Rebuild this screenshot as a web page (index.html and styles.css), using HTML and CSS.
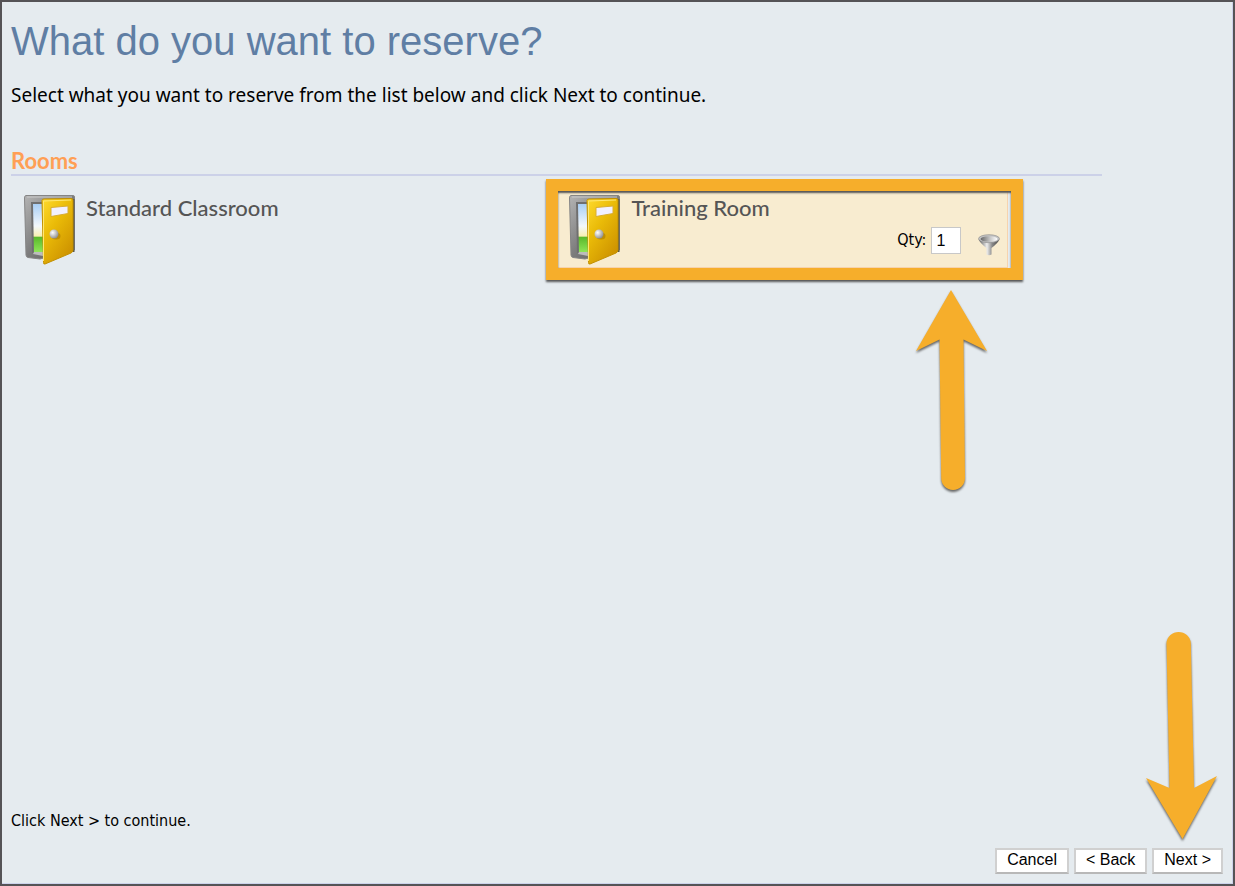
FILE: index.html
```html
<!DOCTYPE html>
<html lang="en">
<head>
<meta charset="utf-8">
<title>What do you want to reserve?</title>
<link rel="stylesheet" href="styles.css">
</head>
<body>
<svg class="defs" aria-hidden="true">
  <defs>
    <linearGradient id="frame" x1="0" y1="0" x2="1" y2="1">
      <stop offset="0" stop-color="#b4b4b4"/><stop offset=".5" stop-color="#7c7c7c"/><stop offset="1" stop-color="#5a5a5a"/>
    </linearGradient>
    <linearGradient id="view" x1="0" y1="0" x2="0" y2="1">
      <stop offset="0" stop-color="#a9cff5"/><stop offset=".45" stop-color="#f3f8fc"/><stop offset=".66" stop-color="#f7efb0"/>
      <stop offset=".67" stop-color="#58b82a"/><stop offset="1" stop-color="#92e85a"/>
    </linearGradient>
    <linearGradient id="leaf" x1="0" y1="0" x2=".7" y2="1">
      <stop offset="0" stop-color="#ffdb2e"/><stop offset=".45" stop-color="#eabb08"/><stop offset="1" stop-color="#cd9200"/>
    </linearGradient>
    <radialGradient id="knob" cx=".35" cy=".35" r=".7">
      <stop offset="0" stop-color="#ffffff"/><stop offset="1" stop-color="#8d8d8d"/>
    </radialGradient>
    <linearGradient id="metal" x1="0" y1="0" x2="1" y2="0">
      <stop offset="0" stop-color="#555"/><stop offset=".4" stop-color="#eee"/><stop offset=".65" stop-color="#888"/><stop offset="1" stop-color="#444"/>
    </linearGradient>
    <linearGradient id="bowl" x1="0" y1="0" x2="1" y2="0">
      <stop offset="0" stop-color="#666"/><stop offset=".6" stop-color="#ccc"/><stop offset="1" stop-color="#fff"/>
    </linearGradient>
    <symbol id="door" viewBox="0 0 52 71">
      <path d="M2 .5H49q1.500 0 1.500 1.500V55L16 64 4 62.500Q2 62 2 60L.5 3Q.5.500 2 .5Z" fill="url(#frame)" stroke="#858585"/>
      <path d="M3 2H48" stroke="#c9c9c9" fill="none"/>
      <path d="M7 7H20V60L8 58Z" fill="#6f6f6f"/>
      <path d="M9 9H19V58H10Z" fill="url(#view)"/>
      <path d="M10 57H19V61L9 59Z" fill="#bcbcbc"/>
      <path d="M49.500 4V57" stroke="#55554c" stroke-width="2"/>
      <path d="M18 5.500Q18 4 20 4L47 3.500Q49 3.500 49 5V55Q49 57 47 58L21 69Q19.500 69.500 19.500 67.500Z" fill="url(#leaf)" stroke="#c29000"/>
      <path d="M19.500 66V6L47 5" fill="none" stroke="#ffe873"/>
      <path d="M27 12.500 44 11V18.500L27 21.500Z" fill="#f1f0ff" stroke="#d8ad32"/>
      <ellipse cx="32" cy="41" rx="4.500" ry="3.500" fill="#a97900" opacity=".6"/>
      <circle cx="30" cy="39" r="4.500" fill="url(#knob)"/>
    </symbol>
  </defs>
</svg>
<main class="wizard">
  <h1 class="title">What do you want to reserve?</h1>
  <p class="intro">Select what you want to reserve from the list below and click Next to continue.</p>
  <section class="group">
    <h2 class="group-title">Rooms</h2>
    <div class="items">
      <article class="item">
        <svg class="door" aria-hidden="true"><use href="#door"/></svg>
        <h3 class="item-name">Standard Classroom</h3>
      </article>
      <article class="item selected">
        <svg class="door" aria-hidden="true"><use href="#door"/></svg>
        <div class="item-body">
          <h3 class="item-name">Training Room</h3>
          <div class="options">
            <label for="qty">Qty:</label>
            <input class="qty" id="qty" type="text" value="1">
            <button class="filter" type="button" aria-label="Filter">
              <svg width="22" height="22" viewBox="0 0 22 22">
                <path d="M.500 5.500Q2 9 8.500 14V20.500q2.500 1.500 5 0V14Q20 9 21.500 5.500Z" fill="url(#metal)"/>
                <ellipse cx="11" cy="4.700" rx="10.500" ry="4" fill="#c4c4c4" stroke="#888" stroke-width=".6"/>
                <ellipse cx="11" cy="5" rx="8.500" ry="2.800" fill="url(#bowl)"/>
              </svg>
            </button>
          </div>
        </div>
        <span class="callout"></span>
        <svg class="arrow arrow-up" width="74" height="206" viewBox="0 0 74 206" aria-hidden="true">
          <path d="M36 2 72 63 48.500 51.500 50 190A11.900 11.900 0 0 1 26.200 190L24.500 51.500 1 63Z"/>
        </svg>
      </article>
    </div>
  </section>
  <footer class="footer">
    <p class="hint">Click Next &gt; to continue.</p>
    <div class="actions">
      <button class="btn" type="button">Cancel</button>
      <button class="btn" type="button">&lt; Back</button>
      <div class="next">
        <button class="btn" type="button">Next &gt;</button>
        <svg class="arrow arrow-down" width="74" height="212" viewBox="0 0 74 212" aria-hidden="true">
          <path d="M21.500 13A12.200 12.200 0 0 1 45.800 13L49 158 72 146 37.500 209 1 148 24.500 158Z"/>
        </svg>
      </div>
    </div>
  </footer>
</main>
</body>
</html>
```
FILE: styles.css
```css
* { box-sizing: border-box; }
body {
  margin: 0;
  background: #e5ebef;
  color: #000;
  font-family: "DejaVu Sans Condensed", "Noto Sans", sans-serif;
}
h1, h2, h3, p { margin: 0; }
.defs { position: absolute; width: 0; height: 0; }
.wizard {
  display: flex;
  flex-direction: column;
  min-height: 100vh;
  padding: 15px 10px 10px 9px;
  border: 2px solid #555356;
  box-shadow: inset -1px -1px 0 #ccd2ea;
}
.title {
  color: #5f7ea4;
  font: 400 40px/48px "Liberation Sans", Arial, sans-serif;
}
.intro {
  margin-top: 18px;
  font: 19px/24px "Noto Sans", sans-serif;
}
.group {
  width: 90%;
  margin-top: 40px;
}
.group-title {
  height: 29px;
  border-bottom: 2px solid #ccd1e8;
  color: #ff9f55;
  font: 700 22px/28px Lato, sans-serif;
}
.items {
  display: grid;
  grid-template-columns: 1fr 1fr;
  padding-top: 15px;
}
.item {
  position: relative;
  display: flex;
  gap: 10px;
  width: 452px;
  height: 77px;
  padding: 4px 6px 0 13px;
}
.selected {
  border: 1px solid #f6d3ae;
  background: #f8ecd0;
  padding: 3px 7px 0 12px;
}
.door {
  width: 52px;
  height: 71px;
  flex: none;
}
.item-body { flex: 1; }
.item-name {
  color: #555;
  font: 500 22px/26px Lato, sans-serif;
}
.options {
  display: flex;
  justify-content: flex-end;
  align-items: flex-start;
  margin-top: 6px;
  font-size: 16px;
  line-height: 26px;
}
.qty {
  width: 30px;
  height: 27px;
  margin: 0 17px 0 5px;
  padding: 0 4px;
  border: 1px solid #c8c8c8;
  background: #fff;
  font: 16px "Liberation Sans", Arial, sans-serif;
}
.filter {
  padding: 7px 0 0;
  border: 0;
  background: none;
  line-height: 0;
}
.callout {
  position: absolute;
  inset: -13px -16px -13px -11px;
  border: 12px solid #f6ae2b;
  box-shadow: 0 2px 2px #555, inset 0 2px 2px #555;
}
.arrow {
  position: absolute;
  fill: #f6ae2b;
  filter: drop-shadow(0 2px 1px #666);
}
.arrow-up { top: 96px; left: 358px; }
.footer { margin-top: auto; }
.hint {
  font-size: 16px;
  line-height: 20px;
}
.actions {
  display: flex;
  justify-content: flex-end;
  gap: 5px;
  margin-top: 17px;
}
.btn {
  height: 26px;
  padding: 0 10px 3px;
  border: 2px solid #d0d0d0;
  border-bottom-color: #b8b8b8;
  background: #fff;
  color: #000;
  font: 16px/20px "Liberation Sans", Arial, sans-serif;
}
.next { position: relative; }
.arrow-down { bottom: 32px; right: 4px; }
```
